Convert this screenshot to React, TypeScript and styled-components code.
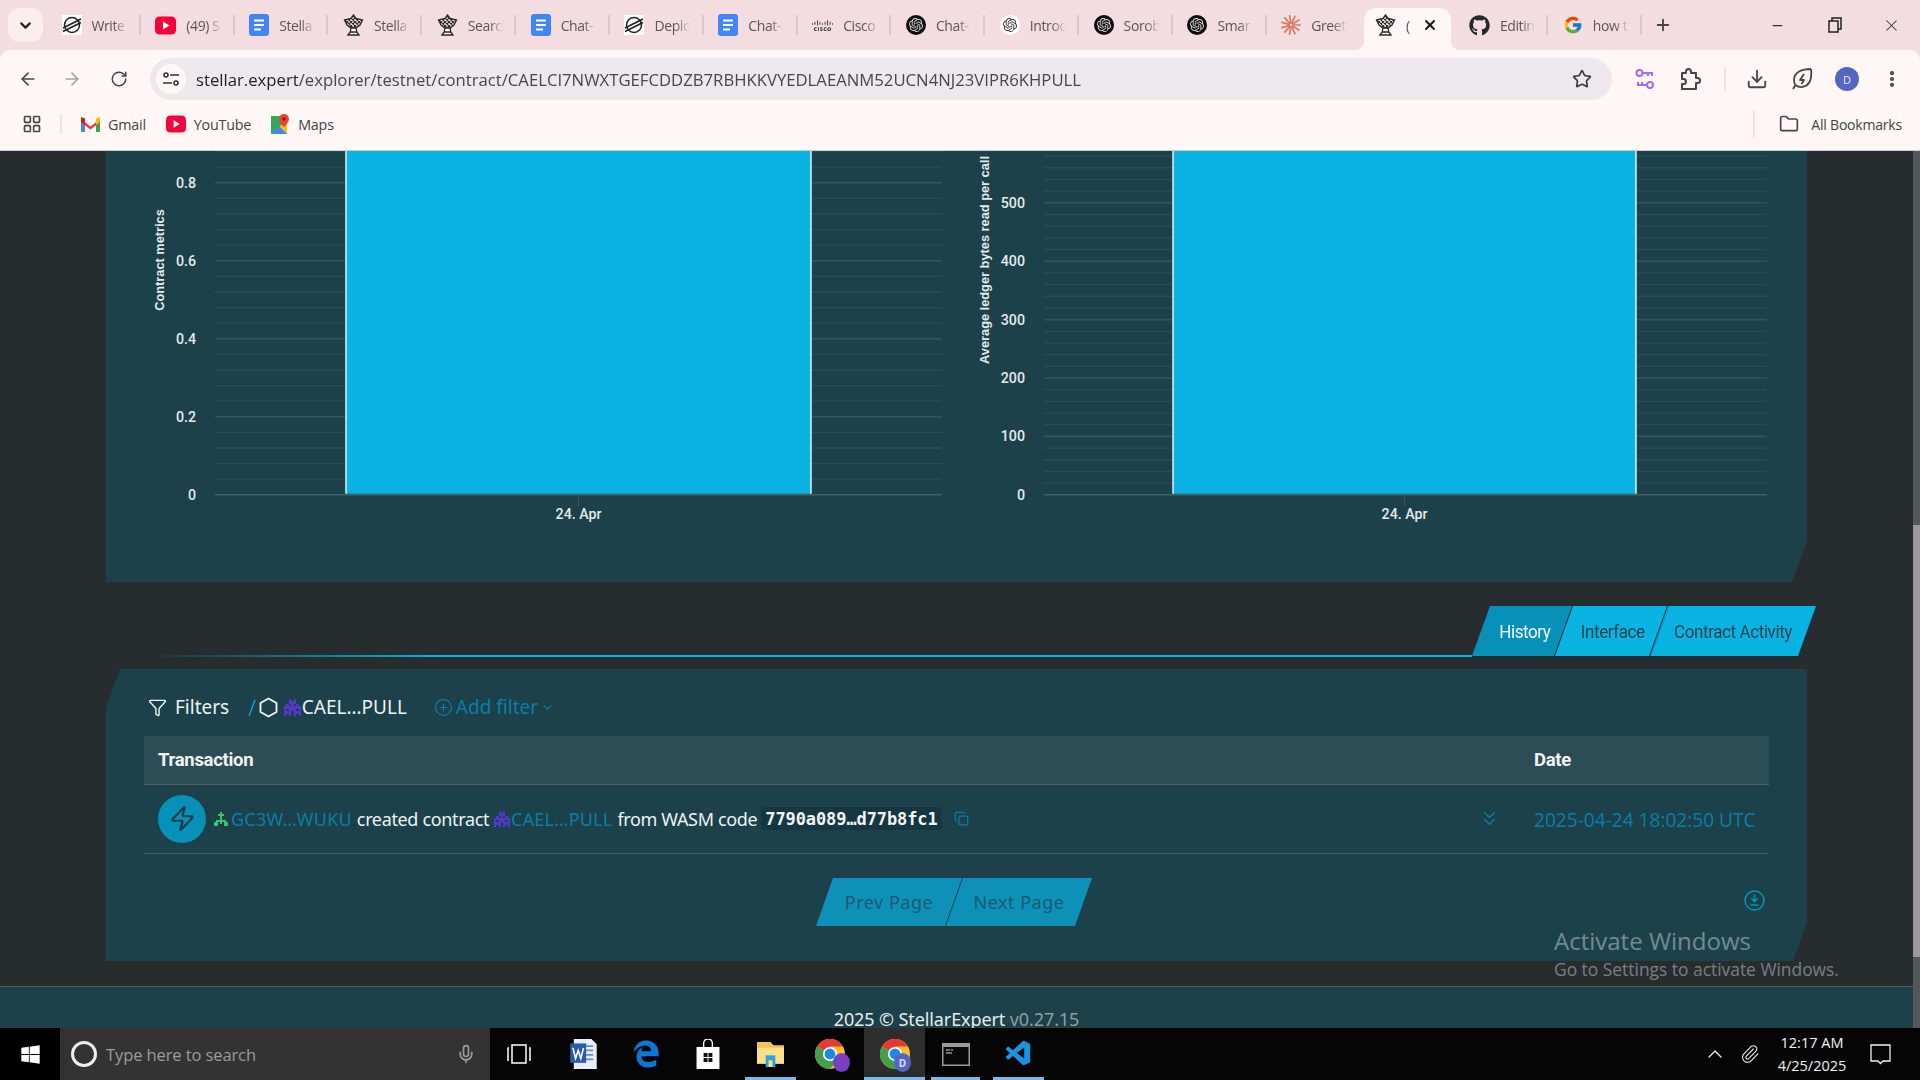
import React from 'react';
import styled, {createGlobalStyle} from 'styled-components';
import {
    ArrowLeft,
    ArrowRight,
    ChevronDown,
    ChevronsDown,
    ChevronUp,
    CirclePlus,
    Copy,
    Download,
    Filter,
    Folder,
    LayoutGrid,
    Mic,
    Minus,
    MoreVertical,
    Paperclip,
    Plus,
    RotateCw,
    Star,
    X,
    Zap
} from 'lucide-react';
import {FaGithub, FaWindows, FaEdgeLegacy} from 'react-icons/fa';
import {FcGoogle} from 'react-icons/fc';
import {SiCisco, SiOpenai} from 'react-icons/si';
import {VscVscode} from 'react-icons/vsc';

const PANEL = '#1c414b';
const PAGE = '#272c2f';
const CYAN = '#09b3e2';
const CYAN_DARK = '#0891b8';
const LINK = '#0a7ea8';
const CHROME_TEXT = '#4a4446';

const GlobalStyle = createGlobalStyle`
    html, body {
        margin: 0;
        padding: 0;
        width: 1920px;
        height: 1080px;
        overflow: hidden;
        background: ${PAGE};
    }
    * {
        box-sizing: border-box;
    }
`;

const Screen = styled.div`
    width: 1920px;
    height: 1080px;
    display: flex;
    flex-direction: column;
    overflow: hidden;
    font-family: 'Noto Sans', sans-serif;
`;

/* browser chrome */

const TabStrip = styled.div`
    height: 50px;
    background: #f3dde0;
    display: flex;
    align-items: center;
    flex-shrink: 0;
`;

const TabListButton = styled.div`
    width: 35px;
    height: 34px;
    margin: 0 4px 0 8px;
    border-radius: 12px;
    background: #fdeeee;
    color: #1f1f1f;
    display: flex;
    align-items: center;
    justify-content: center;
`;

const TabItem = styled.div<{$active?: boolean; $noSep?: boolean}>`
    position: relative;
    width: 93.83px;
    height: 50px;
    padding-left: 14.5px;
    display: flex;
    align-items: center;
    gap: 10px;
    flex-shrink: 0;
    z-index: ${p => (p.$active ? 1 : 0)};

    ${p =>
        p.$active &&
        `
        &::before {
            content: '';
            position: absolute;
            left: 3px;
            right: 3px;
            top: 8px;
            bottom: 0;
            background: #fff7f5;
            border-radius: 12px 12px 0 0;
        }
    `}

    ${p =>
        !p.$noSep &&
        !p.$active &&
        `
        &::after {
            content: '';
            position: absolute;
            right: 0;
            top: 15px;
            height: 20px;
            width: 2px;
            background: #e0c4c8;
        }
    `}

    > * {
        position: relative;
    }
`;

const Flare = styled.span<{$side: 'left' | 'right'}>`
    position: absolute !important;
    bottom: 0;
    width: 10px;
    height: 10px;
    ${p => (p.$side === 'left' ? 'left: -7px;' : 'right: -7px;')}
    background: radial-gradient(
        circle at ${p => (p.$side === 'left' ? '0 0' : '100% 0')},
        transparent 10px,
        #fff7f5 10.5px
    );
`;

const TabLabel = styled.span<{$active?: boolean}>`
    font-family: 'Open Sans', sans-serif;
    font-size: 14px;
    letter-spacing: -0.4px;
    color: #5c5457;
    width: ${p => (p.$active ? '6px' : '36px')};
    white-space: nowrap;
    overflow: hidden;
    -webkit-mask-image: linear-gradient(90deg, #000 60%, transparent 100%);
    mask-image: linear-gradient(90deg, #000 60%, transparent 100%);
`;

const TabClose = styled.span`
    display: flex;
    color: #1a1a1a;
    margin-left: 0;
`;

const NewTab = styled.div`
    margin-left: 12px;
    display: flex;
    color: #4a4446;
`;

const WindowControls = styled.div`
    margin-left: auto;
    display: flex;
    align-items: center;
    height: 50px;
    color: #333;
`;

const WindowButton = styled.div`
    width: 57px;
    display: flex;
    justify-content: center;
`;

const Toolbar = styled.div`
    height: 58px;
    background: #fff7f5;
    display: flex;
    align-items: center;
    flex-shrink: 0;
    border-radius: 10px 10px 0 0;
`;

const ToolbarWrap = styled.div`
    background: #f3dde0;
    flex-shrink: 0;
`;

const NavButton = styled.div<{$dim?: boolean; $w: number}>`
    width: ${p => p.$w}px;
    display: flex;
    justify-content: center;
    color: ${p => (p.$dim ? '#a9a3a4' : CHROME_TEXT)};
    flex-shrink: 0;
`;

const Omnibox = styled.div`
    width: 1462px;
    height: 42px;
    border-radius: 21px;
    background: #ede8eb;
    display: flex;
    align-items: center;
    padding: 0 0 0 6px;
    flex-shrink: 0;
`;

const SiteInfo = styled.div`
    width: 30px;
    height: 30px;
    border-radius: 50%;
    background: #fff7f5;
    display: flex;
    align-items: center;
    justify-content: center;
    flex-shrink: 0;
    margin-right: 10px;
`;

const UrlText = styled.span`
    font-family: 'Open Sans', sans-serif;
    font-size: 17px;
    color: #1f1f1f;
    white-space: nowrap;
    flex: 1;
    transform-origin: left center;
    transform: scaleX(0.982);

    span {
        color: #47474a;
    }
`;

const OmniStar = styled.div`
    display: flex;
    width: 60px;
    justify-content: center;
    color: #3c3c3c;
`;

const Divider = styled.div<{$h: number; $ml?: number; $mr?: number}>`
    width: 2px;
    height: ${p => p.$h}px;
    background: #f6dfe1;
    flex-shrink: 0;
    margin: 0 ${p => p.$mr ?? 0}px 0 ${p => p.$ml ?? 0}px;
`;

const Avatar = styled.div`
    width: 24px;
    height: 24px;
    border-radius: 50%;
    background: #5566c0;
    color: #e8e8f4;
    font-family: 'Open Sans', sans-serif;
    font-size: 11px;
    display: flex;
    align-items: center;
    justify-content: center;
`;

const BookmarkBar = styled.div`
    height: 42px;
    background: #fff7f5;
    display: flex;
    align-items: center;
    padding: 0 0 10px 0;
    flex-shrink: 0;
`;

const Bookmark = styled.div<{$ml: number}>`
    display: flex;
    align-items: center;
    gap: 8px;
    margin-left: ${p => p.$ml}px;
    font-family: 'Open Sans', sans-serif;
    font-size: 14.3px;
    letter-spacing: -0.2px;
    color: #444;
    flex-shrink: 0;
`;

const AllBookmarks = styled(Bookmark)`
    margin-left: auto;
    margin-right: 18px;
    gap: 12px;
    font-size: 14px;
`;

/* page */

const Page = styled.div`
    position: relative;
    flex: 1;
    min-height: 0;
    display: flex;
    background: ${PAGE};
    border-top: 1px solid #c9cdce;
`;

const Main = styled.main`
    width: 1913px;
    display: flex;
    flex-direction: column;
    overflow: hidden;
`;

const ScrollTrack = styled.div`
    width: 7px;
    background: #55585a;
    display: flex;
    flex-direction: column;
    padding-top: 374px;
`;

const ScrollThumb = styled.div`
    height: 432px;
    background: #9a9a9a;
`;

const ChartPanel = styled.section`
    margin-left: 106px;
    width: 1701px;
    height: 431px;
    flex-shrink: 0;
    background: ${PANEL};
    display: flex;
    clip-path: polygon(0 0, 100% 0, 100% 391px, 1686px 100%, 0 100%);
`;

const ChartSvg = styled.svg`
    display: block;
    flex-shrink: 0;
`;

const TickText = styled.text`
    font-family: Roboto, sans-serif;
    font-size: 14.2px;
    font-weight: 500;
    fill: #e6eaec;
`;

const AxisTitle = styled.text`
    font-family: 'Liberation Sans', sans-serif;
    font-size: 12.8px;
    font-weight: 700;
    fill: #e6eaec;
`;

const TabsRow = styled.div`
    margin: 24px 0 0 144px;
    width: 1672px;
    height: 51px;
    display: flex;
    flex-shrink: 0;
`;

const TabsLine = styled.div`
    flex: 1;
    height: 2px;
    align-self: flex-end;
    background: linear-gradient(90deg, transparent 0, ${CYAN} 22%);
`;

const PageTab = styled.div<{$w: number; $active?: boolean; $shift?: number}>`
    position: relative;
    width: ${p => p.$w}px;
    height: 50px;
    margin-left: -17px;
    padding: 1px 0 0 ${p => p.$shift ?? 0}px;
    background: ${p => (p.$active ? CYAN_DARK : CYAN)};
    color: ${p => (p.$active ? '#f2f6f7' : PANEL)};
    clip-path: polygon(18px 0, 100% 0, calc(100% - 18px) 100%, 0 100%);
    font-family: Roboto, sans-serif;
    font-size: 18.5px;
    letter-spacing: -0.45px;
    display: flex;
    align-items: center;
    justify-content: center;
    flex-shrink: 0;
`;

const TabText = styled.span`
    display: inline-block;
    transform: scaleX(0.92);
    white-space: nowrap;
`;

const FirstTab = styled(PageTab)`
    margin-left: 0;
`;

const SeparatedTab = styled(PageTab)`
    &::before {
        content: '';
        position: absolute;
        left: 0;
        top: 0;
        width: 20px;
        height: 100%;
        background: #0e8fb8;
        clip-path: polygon(18px 0, 19.5px 0, 1.5px 100%, 0 100%);
    }
`;

const ListPanel = styled.section`
    margin: 12px 0 0 106px;
    width: 1701px;
    height: 292px;
    flex-shrink: 0;
    background: ${PANEL};
    padding: 0 38px;
    display: flex;
    flex-direction: column;
    clip-path: polygon(14px 0, 100% 0, 100% 253px, 1687px 100%, 0 100%, 0 39px);
`;

const FilterRow = styled.div`
    height: 67px;
    padding: 9px 0 0 4px;
    display: flex;
    align-items: center;
    flex-shrink: 0;
    color: #eef2f3;
    font-size: 19px;
`;

const FilterLabel = styled.span`
    margin-left: 8px;
`;

const Slash = styled.span`
    color: ${CYAN};
    margin: 0 3px 0 19px;
    font-size: 22px;
    font-weight: 300;
`;

const TokenIcon = styled.span`
    display: flex;
    margin: 0 1px 0 6px;
`;

const AddFilter = styled.span`
    display: flex;
    align-items: center;
    gap: 3px;
    margin-left: 27px;
    color: ${LINK};
`;

const TableHead = styled.div`
    height: 49px;
    background: #2c4c56;
    border-bottom: 1px solid #5c5c5c;
    display: grid;
    grid-template-columns: 1390px 1fr;
    align-items: center;
    flex-shrink: 0;
    font-family: Roboto, sans-serif;
    font-weight: 700;
    font-size: 18.5px;
    letter-spacing: -0.3px;
    color: #f2f4f4;
`;

const HeadCell = styled.div<{$pad?: number}>`
    padding-left: ${p => p.$pad ?? 0}px;
`;

const TableRow = styled.div`
    height: 69px;
    border-bottom: 1px solid #4d5a60;
    display: grid;
    grid-template-columns: 1390px 1fr;
    align-items: center;
    flex-shrink: 0;
`;

const OperationCell = styled.div`
    padding: 0 0 1px 14px;
    display: flex;
    align-items: center;
    color: #eef2f3;
    font-size: 18px;
    letter-spacing: -0.35px;
    white-space: nowrap;
`;

const OpIcon = styled.div`
    width: 48px;
    height: 48px;
    border-radius: 50%;
    background: ${CYAN_DARK};
    color: #17404c;
    display: flex;
    align-items: center;
    justify-content: center;
    flex-shrink: 0;
    margin-right: 8px;
`;

const AddressLink = styled.span<{$ml: number}>`
    display: inline-flex;
    align-items: center;
    gap: 1px;
    color: ${LINK};
    letter-spacing: 0.2px;
    margin: 0 5px 0 ${p => p.$ml}px;
`;

const CodeChip = styled.code`
    margin-left: 4px;
    padding: 2px 4px;
    height: 23px;
    display: inline-flex;
    align-items: center;
    background: #163741;
    border-radius: 4px;
    font-family: 'DejaVu Sans Mono', monospace;
    font-weight: 700;
    font-size: 17px;
    letter-spacing: -0.1px;
    color: #f2f4f4;
`;

const CopyIcon = styled.span`
    display: flex;
    margin-left: 12px;
    color: ${LINK};
`;

const ExpandIcon = styled.span`
    display: flex;
    margin-left: auto;
    margin-right: 33px;
    color: ${LINK};
`;

const DateCell = styled.div`
    font-family: 'Open Sans', sans-serif;
    font-size: 19.1px;
    color: ${LINK};
    white-space: nowrap;
    padding-top: 2px;
`;

const PagerRow = styled.div`
    margin-top: 24px;
    padding-right: 5px;
    display: grid;
    grid-template-columns: 1fr auto 1fr;
    flex-shrink: 0;
`;

const Pager = styled.div`
    grid-column: 2;
    display: flex;
`;

const PagerButton = styled.div<{$w: number}>`
    width: ${p => p.$w}px;
    height: 48px;
    padding-bottom: 1px;
    background: #0d91b8;
    color: #1c5a70;
    font-size: 18px;
    letter-spacing: 0.5px;
    display: flex;
    align-items: center;
    justify-content: center;
    clip-path: polygon(17px 0, 100% 0, calc(100% - 17px) 100%, 0 100%);
`;

const NextButton = styled(PagerButton)`
    margin-left: -16px;
`;

const ExportIcon = styled.div`
    grid-column: 3;
    justify-self: end;
    color: ${CYAN_DARK};
    display: flex;
    margin: 12px -1px 0 0;
`;

const Footer = styled.footer`
    margin-top: 25px;
    flex: 1;
    background: ${PANEL};
    border-top: 1px solid #565c5e;
    padding-top: 20px;
    text-align: center;
    font-size: 18px;
    letter-spacing: -0.1px;
    color: #e8ecec;

    span {
        color: #8f9ea2;
    }
`;

const Watermark = styled.div`
    position: absolute;
    left: 1554px;
    top: 774px;
    font-family: 'Open Sans', sans-serif;
    color: rgba(255, 255, 255, 0.4);
    pointer-events: none;
`;

const WatermarkTitle = styled.div`
    font-size: 24px;
    line-height: 32px;
`;

const WatermarkSub = styled.div`
    font-size: 17.4px;
    line-height: 25px;
`;

/* taskbar */

const Taskbar = styled.div`
    height: 52px;
    background: #050505;
    display: flex;
    align-items: center;
    flex-shrink: 0;
`;

const StartButton = styled.div`
    width: 60px;
    height: 52px;
    background: #000;
    color: #fff;
    display: flex;
    align-items: center;
    justify-content: center;
`;

const SearchBox = styled.div`
    width: 430px;
    height: 52px;
    background: #333;
    display: flex;
    align-items: center;
    padding: 0 14px 0 11px;
    color: #9c9c9c;
    font-size: 17px;
`;

const Cortana = styled.div`
    width: 26px;
    height: 26px;
    border-radius: 50%;
    border: 3px solid #eee;
    margin-right: 9px;
    flex-shrink: 0;
`;

const SearchText = styled.span`
    flex: 1;
    font-family: 'Open Sans', sans-serif;
    font-size: 16.5px;
    letter-spacing: -0.1px;
`;

const TaskButton = styled.div<{$w: number; $ml?: number; $active?: boolean; $running?: boolean}>`
    position: relative;
    width: ${p => p.$w}px;
    margin-left: ${p => p.$ml ?? 0}px;
    height: 52px;
    display: flex;
    align-items: center;
    justify-content: center;
    flex-shrink: 0;
    color: #fff;
    background: ${p => (p.$active ? '#2d2d2d' : 'transparent')};

    ${p =>
        p.$running &&
        `
        &::after {
            content: '';
            position: absolute;
            left: 0;
            right: 0;
            bottom: 0;
            height: 3px;
            background: #76b9ed;
        }
    `}
`;

const Tray = styled.div`
    margin-left: auto;
    display: flex;
    align-items: center;
    color: #f2f2f2;
`;

const TrayIcon = styled.div<{$w: number}>`
    width: ${p => p.$w}px;
    display: flex;
    justify-content: center;
`;

const Clock = styled.div`
    width: 86px;
    margin-left: 2px;
    text-align: center;
    font-family: 'Open Sans', sans-serif;
    font-size: 14.5px;
    line-height: 23px;
`;

const NotifyBox = styled.div`
    width: 65px;
    display: flex;
    justify-content: center;
    padding-right: 15px;
`;

/* icons */

const StellarIcon = () => (
    <svg width='20' height='20' viewBox='0 0 20 20'>
        <rect width='20' height='20' fill='#fff' />
        <circle cx='10' cy='10' r='7.5' fill='none' stroke='#222' strokeWidth='1.5' />
        <path d='M1 13 19 4M1 16.5 19 7.5' stroke='#222' strokeWidth='1.7' />
    </svg>
);

const ExpertIcon = () => (
    <svg width='21' height='22' viewBox='0 0 21 22'>
        <defs>
            <pattern id='lattice' width='4' height='4' patternUnits='userSpaceOnUse'>
                <path d='M0 0 4 4M4 0 0 4' stroke='#2a2a2a' strokeWidth='1.1' />
            </pattern>
        </defs>
        <path d='M10.5 1 13 4.5 19.5 6 17 11 13 14H8L4 11 1.5 6 8 4.5Z' fill='url(#lattice)' stroke='#2a2a2a' strokeWidth='1.3' />
        <path d='M8 14h5l.8 4.2H7.2ZM5 21l2.2-3h6.6L16 21Z' fill='#fff' stroke='#2a2a2a' strokeWidth='1.3' />
    </svg>
);

const YoutubeIcon = ({size = 21}: {size?: number}) => (
    <svg width={size} height={size} viewBox='0 0 21 21'>
        <rect y='1.5' width='21' height='18' rx='4.5' fill='#f5043c' />
        <path d='M8 6.5v8l6.5-4Z' fill='#fff' />
    </svg>
);

const DocsIcon = () => (
    <svg width='20' height='22' viewBox='0 0 20 22'>
        <rect width='20' height='22' rx='3' fill='#4285f4' />
        <path d='M5 6.5h10M5 11h10M5 15.5h7' stroke='#fff' strokeWidth='2' />
    </svg>
);

const GptBadge = styled.span<{$light?: boolean}>`
    width: 20px;
    height: 20px;
    border-radius: 50%;
    background: ${p => (p.$light ? '#fff' : '#0d0d0d')};
    color: ${p => (p.$light ? '#333' : '#ddd')};
    display: flex;
    align-items: center;
    justify-content: center;
    flex-shrink: 0;
`;

const ClaudeIcon = () => (
    <svg width='20' height='20' viewBox='0 0 20 20' stroke='#d97757' strokeWidth='1.7' strokeLinecap='round'>
        {Array.from({length: 11}, (_, i) => {
            const a = (i / 11) * Math.PI * 2;
            return (
                <line
                    key={i}
                    x1={10 + Math.cos(a) * 2}
                    y1={10 + Math.sin(a) * 2}
                    x2={10 + Math.cos(a) * 9.5}
                    y2={10 + Math.sin(a) * 9.5}
                />
            );
        })}
    </svg>
);

const GmailIcon = () => (
    <svg width='19' height='15' viewBox='0 0 19 15'>
        <path d='M0 2v13h4V5Z' fill='#4285f4' />
        <path d='M19 2v13h-4V5Z' fill='#34a853' />
        <path d='M0 2 9.5 9.5 19 2v3.5l-9.5 7L0 5.5Z' fill='#ea4335' />
        <path d='M15 1.5 19 0v5l-4 3Z' fill='#fbbc04' />
        <path d='M0 0v5l4 3V1.5Z' fill='#c5221f' />
    </svg>
);

const MapsIcon = () => (
    <svg width='19' height='20' viewBox='0 0 19 20'>
        <rect y='2' width='16' height='18' fill='#34a853' />
        <path d='M0 20 16 6v14Z' fill='#fbbc04' />
        <path d='M0 20 8 12l8 8Z' fill='#4285f4' />
        <path d='M13 0a5 5 0 0 1 5 5c0 3.5-5 8-5 8s-5-4.5-5-8a5 5 0 0 1 5-5Z' fill='#ea4335' />
        <circle cx='13' cy='5' r='1.8' fill='#8e1f16' />
    </svg>
);

const KeysIcon = () => (
    <svg width='20' height='22' viewBox='0 0 20 22' fill='none' stroke='#a36bf0' strokeWidth='2'>
        <circle cx='4.5' cy='5' r='3' />
        <path d='M7.5 5H18M13 5v3M17 5v3' />
        <circle cx='15' cy='17' r='3' />
        <path d='M12 17H2M7 17v-3M3 17v-3' />
    </svg>
);

const ExtensionIcon = () => (
    <svg width='22' height='24' viewBox='0 0 22 24' fill='none' stroke='#4a4446' strokeWidth='2' strokeLinejoin='round'>
        <path d='M3 6h4V4.500a2.500 2.500 0 0 1 5 0V6h5v5h1.500a2.500 2.500 0 0 1 0 5H17v6H3v-5h1.500a2.500 2.500 0 0 0 0-5H3Z' />
    </svg>
);

const LeafBolt = () => (
    <svg width='22' height='24' viewBox='0 0 22 24' fill='none' stroke='#4a4446' strokeWidth='1.8' strokeLinejoin='round'>
        <path d='M20 2C11 2 3 5 3 13c0 2 .5 4 1.5 5L2 22M20 2c1 9-1 17-9 18-2 .2-4.5-.5-6.5-2' />
        <path d='M13 7l-4 6h4l-2.500 4' />
    </svg>
);

const PixelIcon = ({color, cells, size = 15}: {color: string; cells: string[]; size?: number}) => (
    <svg width={size} height={size} viewBox='0 0 7 7' shapeRendering='crispEdges'>
        {cells.flatMap((row, y) =>
            row.split('').map((cell, x) =>
                cell === '#' ? <rect key={`${x}-${y}`} x={x} y={y} width='1' height='1' fill={color} /> : null
            )
        )}
    </svg>
);

const PURPLE_CELLS = ['  # #  ', '  ###  ', ' # # # ', '#######', '# ### #', '### ###', '# # # #'];
const GREEN_CELLS = ['   #   ', '  ###  ', '   #   ', '   #   ', ' ##### ', '## # ##', '##   ##'];

const HexIcon = () => (
    <svg width='19' height='21' viewBox='0 0 19 21' fill='none' stroke='#f2f4f4' strokeWidth='1.8' strokeLinejoin='round'>
        <path d='M9.500 1.500 17.500 6v9l-8 4.500-8-4.500V6Z' />
    </svg>
);

const ExportGlyph = () => (
    <svg width='21' height='21' viewBox='0 0 21 21' fill='none' stroke='currentColor' strokeWidth='1.6'>
        <circle cx='10.5' cy='10.5' r='9.5' />
        <path d='M10.5 4.500v7M7.500 8.500l3 3 3-3M6.500 15h8' />
    </svg>
);

const ChromeLogo = ({size = 30}: {size?: number}) => (
    <svg width={size} height={size} viewBox='0 0 32 32'>
        <circle cx='16' cy='16' r='16' fill='#fbc02d' />
        <path d='M16 16 2.140 8A16 16 0 0 1 29.860 8H16Z' fill='#e53935' />
        <path d='M16 16 2.140 8A16 16 0 0 0 16 32l7-8Z' fill='#43a047' />
        <circle cx='16' cy='16' r='7.5' fill='#fff' />
        <circle cx='16' cy='16' r='5.8' fill='#1e88e5' />
    </svg>
);

const ProfileBadge = styled.span<{$c: string}>`
    position: absolute;
    right: 14px;
    bottom: 8px;
    width: 17px;
    height: 19px;
    border-radius: 50%;
    background: ${p => p.$c};
    color: #dcdcf0;
    font-size: 10px;
    font-weight: 700;
    display: flex;
    align-items: center;
    justify-content: center;
`;

const WordIcon = () => (
    <svg width='27' height='30' viewBox='0 0 30 34'>
        <path d='M4 0h20l6 6v28H4Z' fill='#e8eef6' />
        <path d='M12 8h14M12 13h14M12 18h14M12 23h14' stroke='#6a90c8' strokeWidth='2' />
        <path d='M0 5h18v22H0Z' fill='#2b5caa' />
        <path d='M3 10l3 12 3-9 3 9 3-12' fill='none' stroke='#fff' strokeWidth='1.8' />
    </svg>
);

const StoreIcon = () => (
    <svg width='24' height='30' viewBox='0 0 26 34'>
        <path d='M8 9V5a5 5 0 0 1 10 0v4' fill='none' stroke='#fff' strokeWidth='1.6' />
        <path d='M0 9h26v25H0Z' fill='#fff' />
        <path d='M8 16h4.500v4.500H8ZM13.500 16H18v4.500h-4.500ZM8 21.500h4.500V26H8ZM13.500 21.500H18V26h-4.500Z' fill='#111' />
    </svg>
);

const ExplorerIcon = () => (
    <svg width='27' height='25' viewBox='0 0 28 30' preserveAspectRatio='none'>
        <path d='M0 0h14l3 4h11v22H0Z' fill='#f3c550' />
        <path d='M0 7h28v19H0Z' fill='#fbe08a' />
        <path d='M9 16h10v14H9Z' fill='#29a3d8' />
        <path d='M12 22h4v8h-4Z' fill='#fbe08a' />
    </svg>
);

const TerminalIcon = () => (
    <svg width='28' height='23' viewBox='0 0 28 23'>
        <rect width='28' height='23' fill='#9a9a9a' />
        <rect x='1.5' y='4' width='25' height='17.5' fill='#0a0a0a' />
        <path d='M4 7h4M9 7h2M4 10h6' stroke='#ddd' strokeWidth='1' />
    </svg>
);

/* data */

const TABS: {label: string; icon: React.ReactNode; noSep?: boolean}[] = [
    {label: 'Write', icon: <StellarIcon />},
    {label: '(49) S', icon: <YoutubeIcon />},
    {label: 'Stella', icon: <DocsIcon />},
    {label: 'Stella', icon: <ExpertIcon />},
    {label: 'Search', icon: <ExpertIcon />},
    {label: 'Chat-', icon: <DocsIcon />},
    {label: 'Deplo', icon: <StellarIcon />},
    {label: 'Chat-', icon: <DocsIcon />},
    {label: 'Cisco', icon: <SiCisco size={21} color='#333' />},
    {label: 'Chat-', icon: <GptBadge><SiOpenai size={14} /></GptBadge>},
    {label: 'Introd', icon: <GptBadge $light><SiOpenai size={14} /></GptBadge>},
    {label: 'Sorob', icon: <GptBadge><SiOpenai size={14} /></GptBadge>},
    {label: 'Smar', icon: <GptBadge><SiOpenai size={14} /></GptBadge>},
    {label: 'Greet', icon: <ClaudeIcon />, noSep: true}
];

const Y_ZERO = 343.8;

interface ChartProperties {
    width: number;
    title: string;
    titleX: number;
    titleY: number;
    labelRight: number;
    gridLeft: number;
    gridRight: number;
    barLeft: number;
    barRight: number;
    step: number;
    labels: string[];
}

const Chart = ({width, title, titleX, titleY, labelRight, gridLeft, gridRight, barLeft, barRight, step, labels}: ChartProperties) => {
    const minor = step / 5;
    const count = Math.floor(Y_ZERO / minor);
    const middle = (barLeft + barRight) / 2;

    return (
        <ChartSvg width={width} height={431} viewBox={`0 0 ${width} 431`}>
            {Array.from({length: count + 1}, (_, i) => {
                const y = Y_ZERO - i * minor;
                const major = i % 5 === 0;
                return (
                    <line
                        key={i}
                        x1={gridLeft}
                        x2={gridRight}
                        y1={y}
                        y2={y}
                        stroke={i === 0 ? '#465f66' : major ? '#35545c' : '#2a4c55'}
                        strokeWidth={major ? 1.6 : 1.3}
                    />
                );
            })}
            <line x1={middle} x2={middle} y1={Y_ZERO} y2={Y_ZERO + 12} stroke='#35545c' />
            <rect x={barLeft} y={-2} width={barRight - barLeft} height={Y_ZERO + 1} fill={CYAN} />
            <line x1={barLeft} x2={barLeft} y1={-2} y2={Y_ZERO - 1} stroke='#dff3fa' strokeWidth='1.5' />
            <line x1={barRight} x2={barRight} y1={-2} y2={Y_ZERO - 1} stroke='#dff3fa' strokeWidth='1.5' />
            {labels.map((label, i) => (
                <TickText key={label} x={labelRight} y={Y_ZERO - i * step + 5} textAnchor='end'>
                    {label}
                </TickText>
            ))}
            <TickText x={middle} y={368} textAnchor='middle'>
                24. Apr
            </TickText>
            <AxisTitle transform={`translate(${titleX} ${titleY}) rotate(-90)`} textAnchor='middle'>
                {title}
            </AxisTitle>
        </ChartSvg>
    );
};

const App = () => (
    <Screen>
        <GlobalStyle />
        <TabStrip>
            <TabListButton>
                <ChevronDown size={17} strokeWidth={3} />
            </TabListButton>
            {TABS.map((tab, i) => (
                <TabItem key={i} $noSep={tab.noSep}>
                    {tab.icon}
                    <TabLabel>{tab.label}</TabLabel>
                </TabItem>
            ))}
            <TabItem $active>
                <Flare $side='left' />
                <Flare $side='right' />
                <ExpertIcon />
                <TabLabel $active>(</TabLabel>
                <TabClose>
                    <X size={16} strokeWidth={3} />
                </TabClose>
            </TabItem>
            <TabItem>
                <FaGithub size={21} color='#24292e' />
                <TabLabel>Editing</TabLabel>
            </TabItem>
            <TabItem>
                <FcGoogle size={20} />
                <TabLabel>how t</TabLabel>
            </TabItem>
            <NewTab>
                <Plus size={18} strokeWidth={2.5} />
            </NewTab>
            <WindowControls>
                <WindowButton>
                    <Minus size={15} />
                </WindowButton>
                <WindowButton>
                    <svg width='14' height='16' viewBox='0 0 14 16' fill='none' stroke='#222' strokeWidth='1.5'>
                        <rect x='1' y='4' width='9' height='11' />
                        <path d='M4 4V1h9v11h-3' />
                    </svg>
                </WindowButton>
                <WindowButton>
                    <X size={19} strokeWidth={1.3} />
                </WindowButton>
            </WindowControls>
        </TabStrip>
        <ToolbarWrap>
            <Toolbar>
                <NavButton $w={56}>
                    <ArrowLeft size={20} />
                </NavButton>
                <NavButton $w={32} $dim>
                    <ArrowRight size={20} />
                </NavButton>
                <NavButton $w={62}>
                    <RotateCw size={18} />
                </NavButton>
                <Omnibox>
                    <SiteInfo>
                        <svg width='18' height='18' viewBox='0 0 18 18' fill='none' stroke='#333' strokeWidth='1.6'>
                            <circle cx='4' cy='5' r='2' />
                            <path d='M8 5h9M1 13h9' />
                            <circle cx='14' cy='13' r='2' />
                        </svg>
                    </SiteInfo>
                    <UrlText>
                        stellar.expert<span>/explorer/testnet/contract/CAELCI7NWXTGEFCDDZB7RBHKKVYEDLAEANM52UCN4NJ23VIPR6KHPULL</span>
                    </UrlText>
                    <OmniStar>
                        <Star size={20} strokeWidth={2} />
                    </OmniStar>
                </Omnibox>
                <NavButton $w={66}>
                    <KeysIcon />
                </NavButton>
                <NavButton $w={24}>
                    <ExtensionIcon />
                </NavButton>
                <Divider $h={24} $ml={22} $mr={8} />
                <NavButton $w={46}>
                    <Download size={22} />
                </NavButton>
                <NavButton $w={44}>
                    <LeafBolt />
                </NavButton>
                <NavButton $w={46}>
                    <Avatar>D</Avatar>
                </NavButton>
                <NavButton $w={44}>
                    <MoreVertical size={20} strokeWidth={3} />
                </NavButton>
            </Toolbar>
        </ToolbarWrap>
        <BookmarkBar>
            <Bookmark $ml={22} />
            <LayoutGrid size={20} color={CHROME_TEXT} />
            <Divider $h={20} $ml={18} $mr={18} />
            <Bookmark $ml={1}>
                <GmailIcon />
                Gmail
            </Bookmark>
            <Bookmark $ml={20}>
                <YoutubeIcon size={20} />
                YouTube
            </Bookmark>
            <Bookmark $ml={20}>
                <MapsIcon />
                Maps
            </Bookmark>
            <AllBookmarks $ml={0}>
                <Divider $h={28} $ml={12} $mr={12} />
                <Folder size={20} color={CHROME_TEXT} />
                All Bookmarks
            </AllBookmarks>
        </BookmarkBar>
        <Page>
            <Main>
                <ChartPanel>
                    <Chart
                        width={860}
                        title='Contract metrics'
                        titleX={58}
                        titleY={109}
                        labelRight={90}
                        gridLeft={109}
                        gridRight={836}
                        barLeft={240}
                        barRight={705}
                        step={78}
                        labels={['0', '0.2', '0.4', '0.6', '0.8']}
                    />
                    <Chart
                        width={841}
                        title='Average ledger bytes read per call'
                        titleX={23}
                        titleY={109}
                        labelRight={59}
                        gridLeft={78}
                        gridRight={801}
                        barLeft={207}
                        barRight={670}
                        step={58.4}
                        labels={['0', '100', '200', '300', '400', '500']}
                    />
                </ChartPanel>
                <TabsRow>
                    <TabsLine />
                    <FirstTab $w={100} $active $shift={5}>
                        <TabText>History</TabText>
                    </FirstTab>
                    <PageTab $w={112} $shift={3}>
                        <TabText>Interface</TabText>
                    </PageTab>
                    <SeparatedTab $w={166}>
                        <TabText>Contract Activity</TabText>
                    </SeparatedTab>
                </TabsRow>
                <ListPanel>
                    <FilterRow>
                        <Filter size={19} strokeWidth={1.8} />
                        <FilterLabel>Filters</FilterLabel>
                        <Slash>/</Slash>
                        <HexIcon />
                        <TokenIcon>
                            <PixelIcon color='#5139c5' cells={PURPLE_CELLS} size={17} />
                        </TokenIcon>
                        <span>CAEL…PULL</span>
                        <AddFilter>
                            <CirclePlus size={19} strokeWidth={1.5} />
                            <span>Add filter</span>
                            <ChevronDown size={13} />
                        </AddFilter>
                    </FilterRow>
                    <TableHead>
                        <HeadCell $pad={14}>Transaction</HeadCell>
                        <HeadCell>Date</HeadCell>
                    </TableHead>
                    <TableRow>
                        <OperationCell>
                            <OpIcon>
                                <Zap size={27} strokeWidth={2} />
                            </OpIcon>
                            <PixelIcon color='#3fbf6f' cells={GREEN_CELLS} size={14} />
                            <AddressLink $ml={3}>GC3W…WUKU</AddressLink>
                            created contract
                            <AddressLink $ml={5}>
                                <PixelIcon color='#5139c5' cells={PURPLE_CELLS} size={16} />
                                CAEL…PULL
                            </AddressLink>
                            from WASM code
                            <CodeChip>7790a089…d77b8fc1</CodeChip>
                            <CopyIcon>
                                <Copy size={15} />
                            </CopyIcon>
                            <ExpandIcon>
                                <ChevronsDown size={23} strokeWidth={1.5} />
                            </ExpandIcon>
                        </OperationCell>
                        <DateCell>2025-04-24 18:02:50 UTC</DateCell>
                    </TableRow>
                    <PagerRow>
                        <Pager>
                            <PagerButton $w={146}>Prev Page</PagerButton>
                            <NextButton $w={146}>Next Page</NextButton>
                        </Pager>
                        <ExportIcon>
                            <ExportGlyph />
                        </ExportIcon>
                    </PagerRow>
                </ListPanel>
                <Footer>
                    2025 © StellarExpert <span>v0.27.15</span>
                </Footer>
            </Main>
            <ScrollTrack>
                <ScrollThumb />
            </ScrollTrack>
            <Watermark>
                <WatermarkTitle>Activate Windows</WatermarkTitle>
                <WatermarkSub>Go to Settings to activate Windows.</WatermarkSub>
            </Watermark>
        </Page>
        <Taskbar>
            <StartButton>
                <FaWindows size={21} />
            </StartButton>
            <SearchBox>
                <Cortana />
                <SearchText>Type here to search</SearchText>
                <Mic size={20} />
            </SearchBox>
            <TaskButton $w={58}>
                <svg width='24' height='20' viewBox='0 0 24 20' fill='none' stroke='#fff' strokeWidth='1.5'>
                    <rect x='5' y='1' width='14' height='18' />
                    <path d='M2 4H1v12h1M22 4h1v12h-1' />
                </svg>
            </TaskButton>
            <TaskButton $w={70}>
                <WordIcon />
            </TaskButton>
            <TaskButton $w={56}>
                <FaEdgeLegacy size={28} color='#0a78d4' />
            </TaskButton>
            <TaskButton $w={68}>
                <StoreIcon />
            </TaskButton>
            <TaskButton $w={51} $ml={3} $running>
                <ExplorerIcon />
            </TaskButton>
            <TaskButton $w={68}>
                <ChromeLogo />
                <ProfileBadge $c='#7a3fc0' />
            </TaskButton>
            <TaskButton $w={61} $active $running>
                <ChromeLogo />
                <ProfileBadge $c='#5566c0'>D</ProfileBadge>
            </TaskButton>
            <TaskButton $w={49} $ml={6} $running>
                <TerminalIcon />
            </TaskButton>
            <TaskButton $w={51} $ml={13} $running>
                <VscVscode size={30} color='#1b93e0' />
            </TaskButton>
            <Tray>
                <TrayIcon $w={35}>
                    <ChevronUp size={24} strokeWidth={1.3} />
                </TrayIcon>
                <TrayIcon $w={35}>
                    <Paperclip size={20} strokeWidth={1.3} />
                </TrayIcon>
                <Clock>
                    12:17 AM
                    <br />
                    4/25/2025
                </Clock>
                <NotifyBox>
                    <svg width='21' height='21' viewBox='0 0 21 21' fill='none' stroke='#f2f2f2' strokeWidth='1.3'>
                        <path d='M1 1h19v16h-7l-2.500 2.500L8 17H1Z' />
                    </svg>
                </NotifyBox>
            </Tray>
        </Taskbar>
    </Screen>
);

export default App;
